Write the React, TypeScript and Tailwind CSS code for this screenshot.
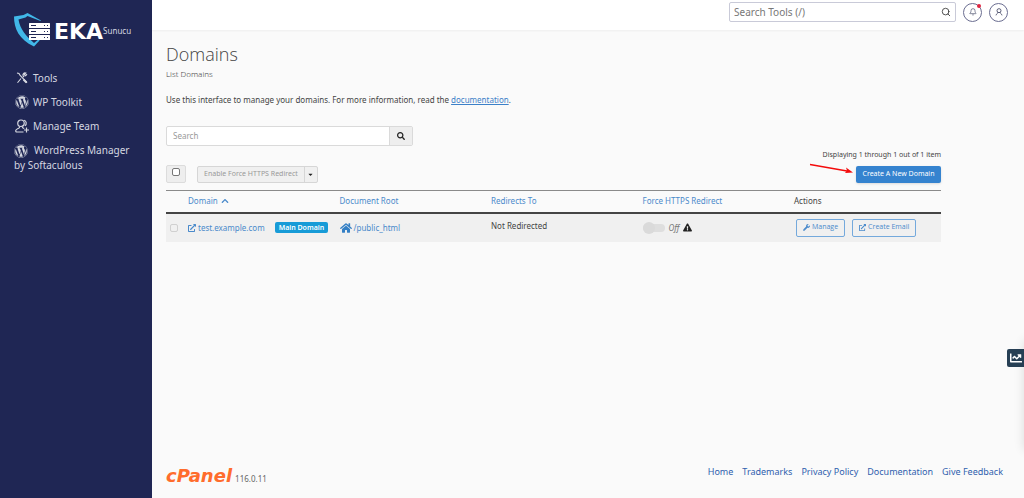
import type { ReactNode } from 'react'
import {
  FaCaretDown,
  FaChartLine,
  FaChevronUp,
  FaExclamationTriangle,
  FaExternalLinkAlt,
  FaHome,
  FaSearch,
  FaWordpress,
  FaWrench,
} from 'react-icons/fa'
import { Bell, Search } from 'lucide-react'

const footerLinks = ['Home', 'Trademarks', 'Privacy Policy', 'Documentation', 'Give Feedback']

function ToolsIcon() {
  return (
    <svg viewBox="0 0 24 24" className="h-3 w-3" fill="none" stroke="currentColor" strokeWidth="2.2" aria-hidden="true">
      <path d="M2 2l4 1 1.5 3L22 21.5M10 13L3 21.500M14 10l2.500-2.500M22 4.500l-3 3-2.500-2.500 3-3c-4-1-6.500 2-5.500 5.500" />
      <path d="M15 15l6 6" strokeWidth="4" />
    </svg>
  )
}

function TeamIcon() {
  return (
    <svg viewBox="0 0 28 28" className="h-3.5 w-3.5" fill="none" stroke="currentColor" strokeWidth="2.4" aria-hidden="true">
      <circle cx="12" cy="8.500" r="6.500" />
      <path d="M18 2.500c5 1 6 8 2 11M9 15v2c0 2-7 2.500-7.500 6-.2 2 .5 3 2 3H17M15 15v2c0 1 2 1.500 3.500 2M23 17v10M18 22h10" />
    </svg>
  )
}

function UserIcon() {
  return (
    <svg viewBox="0 0 24 24" className="h-2 w-2" fill="none" stroke="currentColor" strokeWidth="2.6" aria-hidden="true">
      <circle cx="12" cy="8" r="6" />
      <path d="M9 13c0 4-5 3-6 9M15 13c0 4 5 3 6 9" />
    </svg>
  )
}

function Logo() {
  return (
    <a href="#home" className="flex items-center text-white">
      <svg viewBox="0 0 38 36" className="h-9 w-[38px]" aria-hidden="true">
        {/* Shield */}
        <path
          d="M27 8.500L13.500 1 9.500 3 0 4.500c0 12 5 23 20 30l5.500-6V26.500L20 31C12 24 6 17 4.500 7.500L11.500 5.500l2-1.500 13 5z"
          fill="#41b8e9"
        />
        {/* Server rack */}
        {[11, 17, 23].map((y) => (
          <g key={y}>
            <rect x="15" y={y} width="21" height="5" rx="0.5" fill="#fff" />
            <path d={`M17 ${y + 2.5}h5M30 ${y + 2.5}h1M33 ${y + 2.5}h1`} stroke="#1f2654" />
          </g>
        ))}
      </svg>
      <span className="ml-0.5 pt-1 font-['DejaVu_Sans',sans-serif] text-[22px] leading-6 font-bold">EKA</span>
      <span className="pt-0.5 text-[8px] text-[#d5d7e0]">Sunucu</span>
    </a>
  )
}

function NavItem({ icon, children }: { icon: ReactNode; children: ReactNode }) {
  return (
    <li>
      <a href="#nav" className="flex items-center gap-1">
        <span className="flex w-[15px] justify-center">{icon}</span>
        {children}
      </a>
    </li>
  )
}

function Sidebar() {
  return (
    <aside className="w-[152px] shrink-0 bg-[#1f2654] px-3.5 pt-3 text-[#d5d7e0]">
      <Logo />
      <ul className="mt-[23px] flex flex-col gap-2.5 text-[10px] leading-[14px]">
        <NavItem icon={<ToolsIcon />}>Tools</NavItem>
        <NavItem icon={<FaWordpress className="h-3.5 w-3.5" />}>WP Toolkit</NavItem>
        <NavItem icon={<TeamIcon />}>Manage Team</NavItem>
        <li>
          <a href="#softaculous">
            <FaWordpress className="mr-1.5 inline h-3.5 w-3.5 align-middle" />
            WordPress Manager by Softaculous
          </a>
        </li>
      </ul>
    </aside>
  )
}

function TopBar() {
  return (
    <header className="flex h-[30px] items-center justify-end gap-[7px] bg-white pr-4 pb-1.5 shadow-xs">
      <div className="flex h-5 w-[227px] items-center rounded-xs border border-[#c9cad8] px-1">
        <input
          aria-label="Search Tools"
          placeholder="Search Tools (/)"
          className="min-w-0 flex-1 text-[10px] outline-none placeholder:text-[#777]"
        />
        <Search className="h-2.5 w-2.5 text-[#333]" />
      </div>
      <button
        aria-label="Notifications"
        className="relative flex h-[19px] w-[19px] items-center justify-center rounded-full border border-[#6b6e91] text-[#444866]"
      >
        <Bell className="h-2 w-2" />
        <span className="absolute top-0 right-0 h-1 w-1 rounded-full bg-[#e02440]" />
      </button>
      <button
        aria-label="Account"
        className="flex h-[19px] w-[19px] items-center justify-center rounded-full border border-[#6b6e91] text-[#444866]"
      >
        <UserIcon />
      </button>
    </header>
  )
}

function Toolbar() {
  return (
    <div className="flex items-end justify-between pb-[7px]">
      <div className="flex items-center gap-[11px]">
        <label className="flex h-[18px] w-5 items-start justify-center rounded-xs border border-[#dcdcdc] bg-[#eee] pt-0.5">
          <input type="checkbox" aria-label="Select all domains" className="h-2 w-2 appearance-none rounded-xs border border-[#777] bg-white" />
        </label>
        <div className="flex h-[17px] rounded-xs border border-[#d6d6d6] bg-[#f0f0f0] text-[7px]">
          <button className="border-r border-[#d6d6d6] px-1.5 text-[#999]">Enable Force HTTPS Redirect</button>
          <button aria-label="More actions" className="flex w-3 items-center justify-center text-[#222]">
            <FaCaretDown className="h-[7px] w-[7px]" />
          </button>
        </div>
      </div>
      <div className="flex flex-col items-end gap-1.5">
        <p className="text-[7px] leading-[10px]">Displaying 1 through 1 out of 1 item</p>
        <div className="relative">
          {/* Callout arrow */}
          <svg viewBox="0 0 44 12" className="absolute top-[-3px] right-[88px] h-3 w-11" aria-hidden="true">
            <path d="M1 1.500L38 8" stroke="#f40b0b" strokeWidth="1.300" />
            <path d="M37 4.500L44 9.500l-8 .5 2-2.500z" fill="#f40b0b" />
          </svg>
          <button className="block h-[17px] w-[85px] rounded-xs bg-[#3583cf] text-[7px] text-white shadow">Create A New Domain</button>
        </div>
      </div>
    </div>
  )
}

function DomainsTable() {
  return (
    <table className="w-full table-fixed border-collapse text-left text-[8px]">
      <thead>
        <tr className="h-[22px] border-t border-b-2 border-t-[#8a8a8a] border-b-[#444] text-[#4a8acb]">
          <th className="w-[22px]" />
          <th className="font-normal">
            <a href="#sort-domain" className="flex items-center gap-[3px]">
              Domain <FaChevronUp className="h-2 w-2" />
            </a>
          </th>
          <th className="font-normal"><a href="#sort-root">Document Root</a></th>
          <th className="font-normal"><a href="#sort-redirect">Redirects To</a></th>
          <th className="font-normal"><a href="#sort-https">Force HTTPS Redirect</a></th>
          <th className="w-[147px] font-normal text-[#444]">Actions</th>
        </tr>
      </thead>
      <tbody>
        <tr className="h-[29px] bg-[#f0f0f0]">
          <td className="pl-1">
            <input type="checkbox" disabled aria-label="Select test.example.com" className="block h-2 w-2 appearance-none rounded-xs border border-[#d0d0d0]" />
          </td>
          <td>
            <div className="flex items-center">
              <a href="#domain" className="flex items-center gap-0.5 text-[#4a8acb]">
                <FaExternalLinkAlt className="h-2 w-2" />
                test.example.com
              </a>
              <span className="ml-2.5 rounded-xs bg-[#179bd7] px-1 text-[7px] leading-[11px] font-semibold text-white">Main Domain</span>
            </div>
          </td>
          <td>
            <a href="#root" className="flex items-center gap-0.5 text-[#4a8acb]">
              <FaHome className="h-3 w-3 text-[#337fc5]" />
              /public_html
            </a>
          </td>
          <td className="pb-1">Not Redirected</td>
          <td>
            <div className="flex items-center gap-1">
              <label className="relative flex h-3 w-[22px] items-center">
                <input type="checkbox" disabled aria-label="Force HTTPS Redirect" className="h-2 w-full appearance-none rounded-full bg-[#dedede]" />
                <span className="absolute left-0 h-3 w-3 rounded-full bg-[#dadada]" />
              </label>
              <em className="text-[#777]">Off</em>
              <FaExclamationTriangle className="h-[9px] w-[9px] text-[#222]" />
            </div>
          </td>
          <td>
            <div className="ml-0.5 flex gap-[7px] font-['Open_Sans',sans-serif] text-[7px] text-[#4a8acb]">
              <button className="flex h-[18px] items-center gap-0.5 rounded-xs border border-[#74a9dc] px-1.5">
                <FaWrench className="h-[7px] w-[7px]" />
                Manage
              </button>
              <button className="flex h-[18px] items-center gap-0.5 rounded-xs border border-[#74a9dc] px-1.5">
                <FaExternalLinkAlt className="h-[7px] w-[7px]" />
                Create Email
              </button>
            </div>
          </td>
        </tr>
      </tbody>
    </table>
  )
}

function Footer() {
  return (
    <footer className="mt-auto flex items-start justify-between pr-[21px] pb-2.5 pl-3.5">
      <div className="flex items-baseline">
        <span className="font-['DejaVu_Sans',sans-serif] text-[18px] leading-6 font-bold text-[#ff6c2c] italic">cPanel</span>
        <span className="ml-[3px] text-[8px] text-[#666]">116.0.11</span>
      </div>
      <nav className="flex gap-[9px] text-[9px] leading-4 text-[#2f5fae]">
        {footerLinks.map((link) => (
          <a key={link} href="#footer">{link}</a>
        ))}
      </nav>
    </footer>
  )
}

export default function App() {
  return (
    <div className="flex min-h-screen overflow-hidden bg-[#fafafa] font-['Noto_Sans',sans-serif] text-[#444]">
      <Sidebar />
      <div className="flex min-w-0 flex-1 flex-col">
        <TopBar />
        <main className="mr-[83px] ml-3.5 pt-3">
          <h1 className="font-['Open_Sans',sans-serif] text-[18px] leading-6 font-light">Domains</h1>
          <p className="mt-0.5 text-[8px] leading-3 font-light">List Domains</p>
          <p className="mt-3.5 text-[8px] leading-3">
            Use this interface to manage your domains. For more information, read the{' '}
            <a href="#docs" className="text-[#3c80c8] underline">documentation</a>.
          </p>
          <div className="mt-5 mb-1 flex h-5 w-[247px] rounded-xs border border-[#dadada] bg-white">
            <input aria-label="Search" placeholder="Search" className="min-w-0 flex-1 px-1.5 text-[8px] outline-none placeholder:text-[#999]" />
            <button aria-label="Search domains" className="flex w-[23px] items-center justify-center border-l border-[#dadada] bg-[#eee] text-[#222]">
              <FaSearch className="h-2 w-2" />
            </button>
          </div>
          <Toolbar />
          <DomainsTable />
        </main>
        <Footer />
      </div>
      {/* Collapsed statistics panel: only its shadow and handle show */}
      <div className="fixed top-[340px] -right-20 h-[110px] w-20 shadow-[0_0_10px_rgba(0,0,0,0.12)]" />
      <button aria-label="Statistics" className="fixed top-[349px] right-0 flex h-[18px] w-[17px] items-center justify-center rounded-l-xs bg-[#263f54] text-white">
        <FaChartLine className="h-3 w-3" />
      </button>
    </div>
  )
}
